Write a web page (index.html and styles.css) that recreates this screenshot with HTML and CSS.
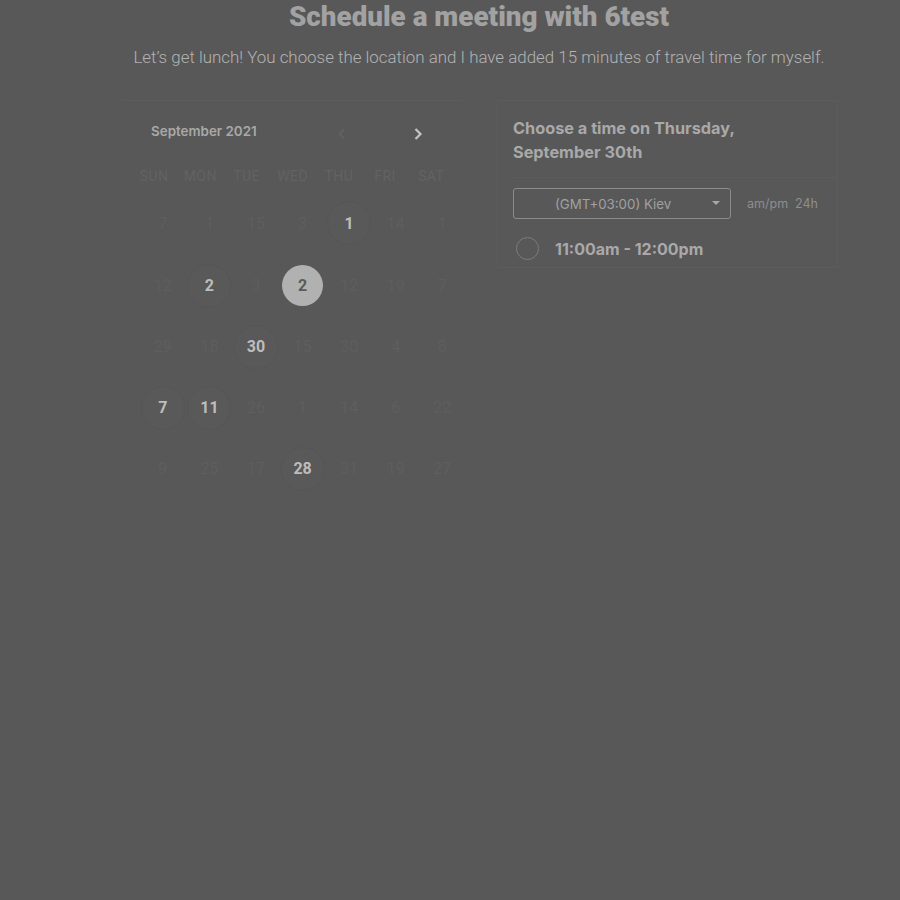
FILE: index.html
```html
<!DOCTYPE html>
<html>
<head>
<meta charset="utf-8">
<link rel="stylesheet" href="styles.css">
</head>
<body>
<div class="page">
  <h1 class="title">Schedule a meeting with 6test</h1>
  <p class="subtitle">Let’s get lunch! You choose the location and I have added 15 minutes of travel time for myself.</p>
  <div class="main">
    <section class="calendar">
      <div class="cal-head">
        <span class="month">September 2021</span>
        <span class="nav prev"><svg width="10" height="14" viewBox="0 0 10 14"><path d="M7.5 2 L2.5 7 L7.5 12" fill="none" stroke="currentColor" stroke-width="1.6"/></svg></span>
        <span class="nav next"><svg width="10" height="14" viewBox="0 0 10 14"><path d="M2.5 2 L7.5 7 L2.5 12" fill="none" stroke="currentColor" stroke-width="2.2"/></svg></span>
      </div>
      <div class="weekdays">
        <div class="wd">SUN</div><div class="wd">MON</div><div class="wd">TUE</div><div class="wd">WED</div><div class="wd">THU</div><div class="wd">FRI</div><div class="wd">SAT</div>
      </div>
      <div class="days">
        <div class="d first"><span>7</span></div><div class="d first"><span>1</span></div><div class="d first"><span>15</span></div><div class="d first"><span>3</span></div><div class="d first on"><span>1</span></div><div class="d first"><span>14</span></div><div class="d first"><span>1</span></div>
        <div class="d"><span>12</span></div><div class="d on"><span>2</span></div><div class="d"><span>3</span></div><div class="d sel"><span>2</span></div><div class="d"><span>12</span></div><div class="d"><span>19</span></div><div class="d"><span>7</span></div>
        <div class="d"><span>29</span></div><div class="d"><span>18</span></div><div class="d on"><span>30</span></div><div class="d"><span>15</span></div><div class="d"><span>30</span></div><div class="d"><span>4</span></div><div class="d"><span>8</span></div>
        <div class="d on"><span>7</span></div><div class="d on"><span>11</span></div><div class="d"><span>26</span></div><div class="d"><span>1</span></div><div class="d"><span>14</span></div><div class="d"><span>6</span></div><div class="d"><span>22</span></div>
        <div class="d"><span>9</span></div><div class="d"><span>25</span></div><div class="d"><span>17</span></div><div class="d on"><span>28</span></div><div class="d"><span>31</span></div><div class="d"><span>19</span></div><div class="d"><span>27</span></div>
      </div>
    </section>
    <section class="times">
      <div class="times-head">Choose a time on Thursday,<br>September 30th</div>
      <div class="tz-row">
        <div class="tz-select">
          <span>(GMT+03:00) Kiev</span>
          <svg class="caret" width="8" height="5" viewBox="0 0 8 5"><path d="M0 0 L8 0 L4 4 Z" fill="currentColor"/></svg>
        </div>
        <div class="fmt"><span>am/pm</span><span>24h</span></div>
      </div>
      <div class="slot">
        <span class="radio"></span>
        <span class="slot-text">11:00am - 12:00pm</span>
      </div>
    </section>
  </div>
</div>
</body>
</html>
```
FILE: styles.css
```css
html, body {
  margin: 0;
  padding: 0;
  background: #585858;
  height: 100%;
}
.page {
  font-family: Roboto, "Liberation Sans", sans-serif;
}
.title {
  margin: 0;
  padding: 1px 0 0 58px;
  text-align: center;
  font-family: Roboto, sans-serif;
  font-weight: 900;
  font-size: 27.8px;
  line-height: 32px;
  color: #a2a2a2;
}
.subtitle {
  margin: 14px 0 0;
  padding-left: 58px;
  text-align: center;
  font-family: Roboto, sans-serif;
  font-weight: 300;
  font-size: 16.9px;
  line-height: 20px;
  color: #b3b3b3;
}
.main {
  display: flex;
  margin: 33px 0 0 122px;
  gap: 34px;
}
.calendar {
  width: 341px;
  border-top: 1px solid #5c5c5c;
  padding-top: 19px;
}
.cal-head {
  display: flex;
  align-items: center;
  height: 22px;
  padding-left: 29px;
  font-family: Inter, sans-serif;
}
.month {
  font-size: 13.4px;
  font-weight: 600;
  color: #a8a8a8;
  width: 184px;
}
.nav {
  display: flex;
  align-items: center;
  margin-top: 5px;
}
.prev { color: #636363; width: 76px; padding-left: 2px; }
.next { color: #c4c4c4; }
.weekdays {
  display: grid;
  grid-template-columns: repeat(7, 46.2px);
  margin-left: 9px;
  margin-top: 26px;
}
.wd {
  text-align: center;
  font-family: Roboto, sans-serif;
  font-size: 14px;
  line-height: 16px;
  letter-spacing: 0.4px;
  color: #626262;
  height: 18px;
}
.days {
  display: grid;
  grid-template-columns: repeat(7, 46.6px);
  margin-left: 17.5px;
}
.d {
  height: 61px;
  display: flex;
  align-items: center;
  justify-content: center;
  font-family: Roboto, sans-serif;
  font-size: 16px;
  color: #5e5e5e;
}
.d.first {
  margin-top: 6px;
  height: 63px;
  padding-bottom: 1px;
  box-sizing: border-box;
}
.d span {
  width: 44px;
  height: 44px;
  border-radius: 50%;
  display: flex;
  align-items: center;
  justify-content: center;
}
.d.on span {
  font-weight: 700;
  color: #bdbdbd;
  box-sizing: border-box;
  border: 1px solid #565656;
  background: #595959;
}
.d.sel span {
  width: 41px;
  height: 41px;
  background: #b1b1b1;
  color: #5a5a5a;
  font-weight: 700;
}
.times {
  width: 341px;
  border: 1px solid #5c5c5c;
  height: 168px;
  box-sizing: border-box;
  padding: 15px 0 0 15px;
  font-family: Inter, sans-serif;
}
.times-head {
  font-size: 16.3px;
  font-weight: 700;
  line-height: 24px;
  color: #a9a9a9;
  border-bottom: 1px solid #5c5c5c;
  padding-bottom: 13px;
}
.tz-row {
  display: flex;
  align-items: center;
  margin-top: 10px;
}
.tz-select {
  width: 218px;
  height: 31px;
  box-sizing: border-box;
  border: 1px solid #8c8c8c;
  border-radius: 3px;
  display: flex;
  align-items: center;
  padding-left: 41px;
  padding-right: 10px;
  font-size: 13.3px;
  color: #a0a0a0;
}
.tz-select span { flex: 1; }
.caret { color: #a8a8a8; }
.fmt {
  margin-left: 16px;
  display: flex;
  gap: 7px;
  font-size: 12.5px;
  color: #8e8e8e;
}
.slot {
  display: flex;
  align-items: center;
  margin-top: 18px;
  margin-left: 3px;
}
.radio {
  width: 23px;
  height: 23px;
  box-sizing: border-box;
  border: 1px solid #7c7c7c;
  border-radius: 50%;
}
.slot-text {
  margin-left: 16px;
  font-size: 16px;
  font-weight: 700;
  color: #a9a9a9;
}
```
